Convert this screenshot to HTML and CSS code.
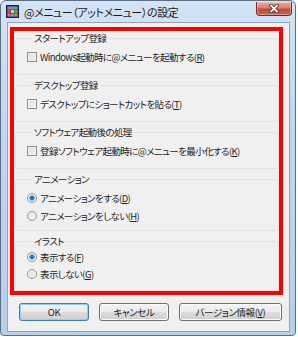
FILE: index.html
```html
<!DOCTYPE html>
<html lang="ja">
<head>
  <meta charset="UTF-8" />
  <title>@メニュー（アットメニュー）の設定</title>
  <link rel="stylesheet" href="styles.css">
</head>
<body>

  <div class="window">
    <!-- title bar -->
    <div class="titlebar">
      <svg class="app-icon" width="13" height="13" viewBox="0 0 13 13">
        <rect x="0.5" y="0.5" width="12" height="12" fill="#2b3a67" stroke="#1b2340"/>
        <rect x="1.5" y="1.5" width="10" height="3" fill="#6f8fd8"/>
        <rect x="1.5" y="5" width="3" height="3" fill="#e8443a"/>
        <rect x="5" y="5" width="3" height="3" fill="#f4d13c"/>
        <rect x="8.5" y="5" width="3" height="3" fill="#52b848"/>
        <rect x="1.5" y="8.5" width="3" height="3" fill="#e86cc0"/>
        <rect x="5" y="8.5" width="3" height="3" fill="#4aa8e8"/>
        <rect x="8.5" y="8.5" width="3" height="3" fill="#f08a2c"/>
      </svg>
      <span class="title">@メニュー（アットメニュー）の設定</span>
      <span class="close">
        <svg width="10" height="9" viewBox="0 0 10 9">
          <path d="M2 1.5 L8 7.5 M8 1.5 L2 7.5" stroke="#3b2a28" stroke-width="3.4" stroke-linecap="square"/>
          <path d="M2 1.5 L8 7.5 M8 1.5 L2 7.5" stroke="#ffffff" stroke-width="1.8" stroke-linecap="square"/>
        </svg>
      </span>
    </div>

    <div class="client">
      <div class="highlight">
        <fieldset class="group">
          <legend>スタートアップ登録</legend>
          <label class="option"><span class="check"></span>Windows起動時に@メニューを起動する(<u>R</u>)</label>
        </fieldset>

        <fieldset class="group">
          <legend>デスクトップ登録</legend>
          <label class="option"><span class="check"></span>デスクトップにショートカットを貼る(<u>T</u>)</label>
        </fieldset>

        <fieldset class="group">
          <legend>ソフトウェア起動後の処理</legend>
          <label class="option"><span class="check"></span>登録ソフトウェア起動時に@メニューを最小化する(<u>K</u>)</label>
        </fieldset>

        <fieldset class="group animation">
          <legend>アニメーション</legend>
          <label class="option"><span class="radio checked"></span>アニメーションをする(<u>D</u>)</label>
          <label class="option"><span class="radio"></span>アニメーションをしない(<u>H</u>)</label>
        </fieldset>

        <fieldset class="group illust">
          <legend>イラスト</legend>
          <label class="option"><span class="radio checked"></span>表示する(<u>F</u>)</label>
          <label class="option"><span class="radio"></span>表示しない(<u>G</u>)</label>
        </fieldset>
      </div>

      <div class="buttons">
        <button class="btn default">OK</button>
        <button class="btn">キャンセル</button>
        <button class="btn wide">バージョン情報(<u>V</u>)</button>
      </div>
    </div>
  </div>

</body>
</html>
```

FILE: styles.css
```css
* {
  box-sizing: border-box;
  margin: 0;
  padding: 0;
  font-family: "Noto Sans CJK JP", "Noto Sans", sans-serif;
  font-feature-settings: "palt" 1;
}

body {
  background: #ffffff;
  width: 298px;
  height: 337px;
  overflow: hidden;
  color: #1e1e1e;
}

.window {
  width: 296px;
  height: 336px;
  border: 1px solid #5b6f86;
  border-radius: 6px 6px 4px 4px;
  background: linear-gradient(to bottom, #d3e3f4 0%, #c0d6ee 40%, #b8cfe8 100%);
  padding: 0 5px 3px 6px;
  display: flex;
  flex-direction: column;
}

/* title bar */
.titlebar {
  height: 21px;
  display: flex;
  align-items: center;
  margin-left: -1px;
}

.app-icon {
  flex-shrink: 0;
}

.title {
  margin-left: 5px;
  font-size: 11px;
  letter-spacing: -0.4px;
  color: #1a1a1a;
  white-space: nowrap;
}

.close {
  margin-left: auto;
  margin-right: -2px;
  align-self: flex-start;
  margin-top: 1px;
  width: 36px;
  height: 14px;
  border: 1px solid #6e2e25;
  border-top: none;
  border-radius: 0 0 4px 4px;
  background: linear-gradient(to bottom, #e9a99a 0%, #d7826f 45%, #c24a36 55%, #c9624b 100%);
  box-shadow: inset 0 0 0 1px rgba(255, 255, 255, 0.35);
  display: flex;
  justify-content: center;
  align-items: center;
}

/* dialog body */
.client {
  height: 310px;
  border: 1px solid #8ea4bb;
  background: #f0f0f0;
  padding: 4px 6px 0 2px;
}

.highlight {
  height: 268px;
  border: 4px solid #ff0000;
  padding: 1px 0 0 1px;
}

.group {
  border: 1px solid #dce4ea;
  border-radius: 3px;
  padding: 4px 0 8px 11px;
  margin-bottom: 4px;
}

.group.animation {
  padding-bottom: 5px;
}

.group.illust {
  padding-top: 1px;
}

.group.illust .option {
  height: 17px;
}

.group legend {
  margin-left: 5px;
  padding: 0 2px;
  font-size: 9.5px;
  letter-spacing: -0.6px;
  line-height: 12px;
}

.option {
  display: flex;
  align-items: center;
  height: 18px;
  font-size: 9.5px;
  letter-spacing: -0.6px;
  white-space: nowrap;
}

.check,
.radio {
  width: 10px;
  height: 10px;
  margin-right: 3px;
  flex-shrink: 0;
  border: 1px solid #8f8f8f;
  background: linear-gradient(135deg, #dcdcdc 0%, #f6f6f6 100%);
  box-shadow: inset 0 0 0 1px #f4f4f4;
}

.radio {
  border-radius: 50%;
  box-shadow: inset 0 0 0 1px #fafafa;
}

.radio.checked {
  background: radial-gradient(circle, #1d5a95 0%, #2f7fc4 30%, #63b1e8 45%, #e4e4e4 55%, #f6f6f6 100%);
}

/* buttons */
.buttons {
  display: flex;
  gap: 10px;
  margin: 8px 0 0 9px;
}

.btn {
  width: 70px;
  height: 18px;
  border: 1px solid #707070;
  border-radius: 3px;
  background: linear-gradient(to bottom, #f3f3f3 0%, #ebebeb 48%, #dddddd 52%, #cfcfcf 100%);
  box-shadow: inset 0 0 0 1px #fbfbfb;
  font-size: 9.5px;
  letter-spacing: -0.4px;
  color: #1e1e1e;
}

.btn.default {
  border-color: #3c7fb1;
  box-shadow: inset 0 0 0 1px #8fd4ef;
}

.btn.wide {
  width: 103px;
}
```
